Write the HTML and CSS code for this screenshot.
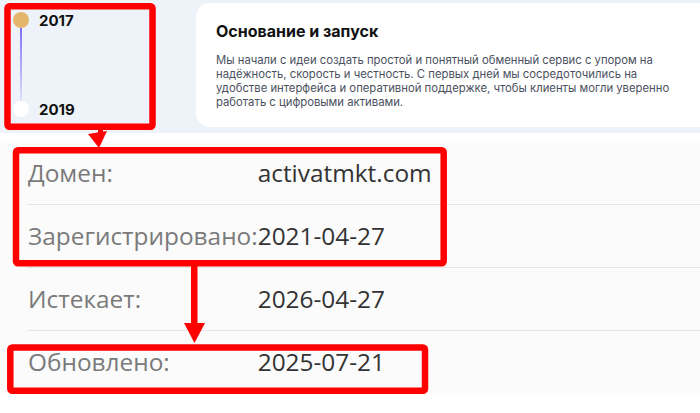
FILE: index.html
```html
<!DOCTYPE html>
<html lang="ru">
<head>
    <meta charset="UTF-8">
    <meta name="viewport" content="width=device-width, initial-scale=1.0">
    <title>История и WHOIS</title>
    <link rel="stylesheet" href="styles.css">
</head>
<body>

    <section class="history">
        <div class="timeline">
            <div class="year"><span class="dot gold"></span>2017</div>
            <div class="line"></div>
            <div class="year"><span class="dot white"></span>2019</div>
        </div>
        <div class="card">
            <h3>Основание и запуск</h3>
            <p>Мы начали с идеи создать простой и понятный обменный сервис с упором на надёжность, скорость и честность. С первых дней мы сосредоточились на удобстве интерфейса и оперативной поддержке, чтобы клиенты могли уверенно работать с цифровыми активами.</p>
        </div>
    </section>

    <section class="whois">
        <table>
            <tr>
                <td class="label">Домен:</td>
                <td class="value">activatmkt.com</td>
            </tr>
            <tr>
                <td class="label">Зарегистрировано:</td>
                <td class="value">2021-04-27</td>
            </tr>
            <tr>
                <td class="label">Истекает:</td>
                <td class="value">2026-04-27</td>
            </tr>
            <tr>
                <td class="label">Обновлено:</td>
                <td class="value">2025-07-21</td>
            </tr>
        </table>
    </section>

    <!-- red annotation marks drawn over the page -->
    <svg class="marks" width="700" height="413" viewBox="0 0 700 413">
        <g fill="none" stroke="#ff0000" stroke-width="6.5">
            <rect x="7.5" y="6.3" width="145" height="120.5" rx="2"/>
            <rect x="16" y="150.3" width="427.7" height="113" rx="2"/>
            <rect x="10.3" y="347.5" width="414.7" height="43.2" rx="2"/>
        </g>
        <g fill="#ff0000">
            <rect x="98" y="126" width="5" height="9"/>
            <polygon points="88,134 107,131 99,148"/>
            <rect x="191" y="263" width="6.5" height="62"/>
            <polygon points="184,323 205,323 194.5,343"/>
        </g>
    </svg>

</body>
</html>
```

FILE: styles.css
```css
*{
    margin: 0;
    padding: 0;
    box-sizing: border-box;
}
body{
    position: relative;
    width: 700px;
    height: 413px;
    overflow: hidden;
    background-color: #fff;
}
.history{
    height: 133px;
    display: flex;
    align-items: flex-start;
    padding: 3px 0 0 13px;
    background-color: #eef3fa;
    font-family: Inter, "Noto Sans", sans-serif;
    overflow: hidden;
}
.timeline{
    width: 183px;
    padding-top: 9px;
    display: flex;
    flex-direction: column;
}
.year{
    display: flex;
    align-items: center;
    gap: 10px;
    height: 16px;
    font-size: 15px;
    font-weight: 700;
    color: #111;
}
.dot{
    width: 16px;
    height: 16px;
    border-radius: 50%;
}
.gold{
    background-color: #e3b66c;
}
.white{
    background-color: #fff;
}
.line{
    width: 2px;
    height: 73px;
    margin-left: 7px;
    background: linear-gradient(#7d6ff6, #e2e0fa);
}
.card{
    flex: 1;
    height: 124px;
    margin-right: -20px;
    padding: 18px 20px;
    background-color: #fff;
    border-radius: 14px;
}
.card h3{
    font-size: 16px;
    line-height: 20px;
    font-weight: 700;
    color: #111;
    margin-bottom: 12px;
}
.card p{
    width: 472px;
    font-size: 11.3px;
    line-height: 14px;
    color: #4b5160;
}
.whois{
    margin-top: 8px;
    background-color: #fbfbfb;
    font-family: "Open Sans", "Noto Sans", sans-serif;
    font-size: 24.4px;
}
.whois table{
    width: calc(100% - 27px);
    margin-left: 27px;
    border-collapse: collapse;
}
.whois td{
    height: 63px;
    padding: 0;
    border-bottom: 1px solid #e6e6e6;
    vertical-align: middle;
}
.whois tr:last-child td{
    border-bottom: none;
}
.label{
    width: 1%;
    padding-left: 1px !important;
    white-space: nowrap;
    color: #7a7a7a;
}
.value{
    color: #333;
}
.marks{
    position: absolute;
    top: 0;
    left: 0;
    pointer-events: none;
}
```
